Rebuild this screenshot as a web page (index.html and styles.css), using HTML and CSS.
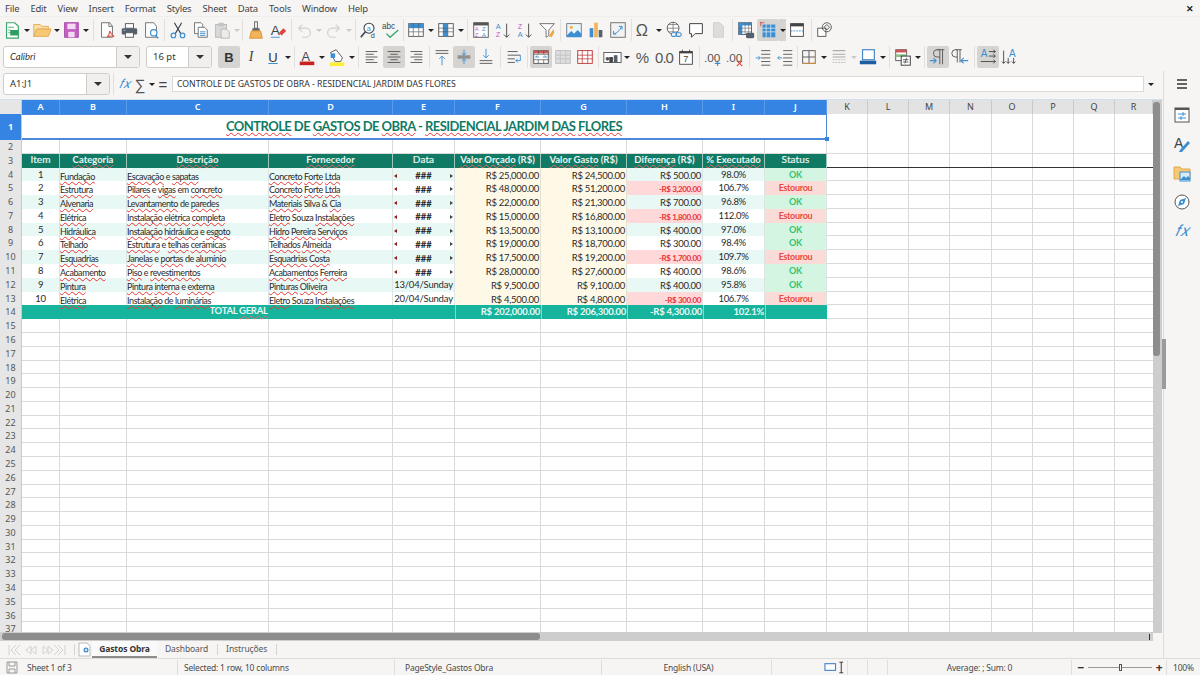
FILE: index.html
```html
<!DOCTYPE html>
<html lang="pt-BR">
<head>
<meta charset="utf-8">
<title>Controle de Gastos de Obra</title>
<link rel="stylesheet" href="styles.css">
</head>
<body>
<div class="app">
  <div class="menubar">
    <nav class="menus"><span>File</span><span>Edit</span><span>View</span><span>Insert</span><span>Format</span><span>Styles</span><span>Sheet</span><span>Data</span><span>Tools</span><span>Window</span><span>Help</span></nav>
    <span class="closex">✕</span>
  </div>

  <div class="toolbar t1">
    <span class="b"><svg class="ic" viewBox="0 0 22 22"><path d="M5 3h9l4 4v13H5z" fill="#fff" stroke="#3aa76d" stroke-width="1.3"/><rect x="9" y="11" width="9" height="6" fill="#2f9e62"/><path d="M7 8h6M7 11h2M7 14h2" stroke="#3aa76d"/></svg></span><span class="dd"></span>
    <span class="b"><svg class="ic" viewBox="0 0 22 22"><path d="M2 18V5h7l2 2h7v3H7l-3 8z" fill="#fbe0a6" stroke="#e0a84e"/><path d="M2 18l3-8h16l-3 8z" fill="#f7c873" stroke="#e0a84e"/></svg></span><span class="dd w7"></span>
    <span class="b"><svg class="ic" viewBox="0 0 22 22"><rect x="4" y="3" width="15" height="16" fill="#c65fc4" stroke="#a444a6"/><rect x="7" y="4" width="9" height="6" fill="#f3d9f2"/><rect x="8" y="13" width="7" height="6" fill="#f3d9f2"/></svg></span><span class="dd"></span>
    <span class="s s6"></span>
    <span class="b"><svg class="ic" viewBox="0 0 22 22"><path d="M5 3h9l3 4v12H5z" fill="#fff" stroke="#6b6b6b"/><path d="M13 3v4h4" fill="none" stroke="#6b6b6b"/><path d="M11 19c2-2 3-5 3-7 1 3 3 5 5 6-3-1-6 0-8 1z" fill="none" stroke="#e2574c" stroke-width="1.2"/></svg></span>
    <span class="b"><svg class="ic" viewBox="0 0 22 22"><rect x="7" y="4" width="9" height="5" fill="#fff" stroke="#555"/><rect x="3" y="9" width="17" height="7" rx="1.5" fill="#55606b"/><rect x="7" y="14" width="9" height="5" fill="#fff" stroke="#555"/><rect x="5" y="11" width="2" height="1" fill="#9ad"/></svg></span>
    <span class="b"><svg class="ic" viewBox="0 0 22 22"><path d="M5 3h9l3 4v12H5z" fill="#fff" stroke="#6b6b6b"/><circle cx="14" cy="14" r="3.5" fill="#fff" stroke="#3d8fd1" stroke-width="1.3"/><path d="M16 17l3 3" stroke="#3d8fd1" stroke-width="1.5"/></svg></span>
    <span class="s s5"></span>
    <span class="b"><svg class="ic" viewBox="0 0 22 22"><path d="M7 3l7 12M15 3L8 15" stroke="#3c4650" stroke-width="1.3"/><circle cx="6" cy="17" r="2.5" fill="none" stroke="#3d8fd1" stroke-width="1.3"/><circle cx="16" cy="17" r="2.5" fill="none" stroke="#3d8fd1" stroke-width="1.3"/></svg></span>
    <span class="b"><svg class="ic" viewBox="0 0 22 22"><path d="M5 3h7l2 2v10H5z" fill="#fff" stroke="#6b6b6b"/><path d="M9 8h7l3 3v8H9z" fill="#fff" stroke="#6b6b6b"/><path d="M11 13h6M11 15h6M11 17h6" stroke="#3d8fd1"/></svg></span>
    <span class="b"><svg class="ic" viewBox="0 0 22 22"><rect x="4" y="5" width="12" height="14" fill="#d9d9d9" stroke="#b5b5b5"/><rect x="7" y="3" width="6" height="4" fill="#c4c4c4"/><path d="M10 10h6l3 3v7h-9z" fill="#ececec" stroke="#b5b5b5"/></svg></span><span class="dd off w7"></span>
    <span class="s s5"></span>
    <span class="b"><svg class="ic" viewBox="0 0 22 22"><rect x="9.500" y="2" width="3" height="7" fill="#fff" stroke="#555"/><rect x="7" y="9" width="8" height="3" fill="#666"/><path d="M6 12h10l2 8H4z" fill="#f2b35a" stroke="#d98f2f"/></svg></span>
    <span class="b"><svg class="ic" viewBox="0 0 22 22"><text x="3" y="16" class="gl" fill="#3c4650" font-size="15">A</text><path d="M12 14l5-5 3 3-5 5z" fill="#e2453c"/><path d="M3 19h10" stroke="#3d8fd1"/></svg></span>
    <span class="s s4"></span>
    <span class="b"><svg class="ic" viewBox="0 0 22 22"><path d="M5 9h8a5 5 0 0 1 0 10H9M5 9l4-4M5 9l4 4" fill="none" stroke="#cfcfcf" stroke-width="1.3"/></svg></span><span class="dd off"></span>
    <span class="b"><svg class="ic" viewBox="0 0 22 22"><path d="M17 9H9a5 5 0 0 0 0 10h4M17 9l-4-4M17 9l-4 4" fill="none" stroke="#cfcfcf" stroke-width="1.3"/></svg></span><span class="dd off w7"></span>
    <span class="s s6"></span>
    <span class="b"><svg class="ic" viewBox="0 0 22 22"><circle cx="11" cy="9" r="5.500" fill="#fff" stroke="#3c4650" stroke-width="1.2"/><path d="M7 13l-5 6" stroke="#3c4650" stroke-width="1.8"/><text x="8.500" y="12" class="gl" font-size="8" fill="#3d8fd1">a</text><text x="13" y="20" class="gl" font-size="8" fill="#3c4650">d</text></svg></span>
    <span class="b"><svg class="ic" viewBox="0 0 22 22"><text x="1" y="10" class="gl" font-size="9" fill="#3c4650">abc</text><path d="M6 15l4 4 9-8" fill="none" stroke="#3aa76d" stroke-width="1.5"/></svg></span>
    <span class="s s3"></span>
    <span class="b"><svg class="ic" viewBox="0 0 22 22"><rect x="3" y="4" width="16" height="14" fill="#fff" stroke="#555"/><rect x="3" y="4" width="16" height="5" fill="#3d8fd1"/><path d="M3 13h16M8 4v14M14 4v14" stroke="#555" stroke-width=".7"/></svg></span><span class="dd"></span>
    <span class="b"><svg class="ic" viewBox="0 0 22 22"><rect x="3" y="4" width="16" height="14" fill="#fff" stroke="#555"/><rect x="8" y="4" width="5" height="14" fill="#3d8fd1"/><path d="M3 9h16M3 13h16M8 4v14M13 4v14" stroke="#555" stroke-width=".7"/></svg></span><span class="dd"></span>
    <span class="s s5"></span>
    <span class="b"><svg class="ic" viewBox="0 0 22 22"><rect x="3" y="3" width="16" height="16" fill="#fff" stroke="#555"/><rect x="3" y="3" width="16" height="3" fill="#555"/><text x="4" y="12" class="gl" font-size="6.500" fill="#c05fc0">A</text><text x="12" y="12" class="gl" font-size="6.500" fill="#3d8fd1">Z</text><text x="4" y="18.500" class="gl" font-size="6.500" fill="#c05fc0">Z</text><text x="12" y="18.500" class="gl" font-size="6.500" fill="#3d8fd1">A</text></svg></span>
    <span class="b"><svg class="ic" viewBox="0 0 22 22"><text x="3" y="10" class="gl" font-size="8" fill="#3d8fd1">A</text><text x="3" y="19" class="gl" font-size="8" fill="#c05fc0">Z</text><path d="M15 4v15M12 16l3 3 3-3" fill="none" stroke="#555" stroke-width="1.1"/></svg></span>
    <span class="b"><svg class="ic" viewBox="0 0 22 22"><text x="3" y="10" class="gl" font-size="8" fill="#c05fc0">Z</text><text x="3" y="19" class="gl" font-size="8" fill="#3d8fd1">A</text><path d="M15 4v15M12 16l3 3 3-3" fill="none" stroke="#555" stroke-width="1.1"/></svg></span>
    <span class="b"><svg class="ic" viewBox="0 0 22 22"><path d="M3 4h16l-6 7v6l-3 2v-8z" fill="#fff" stroke="#6b6b6b"/><path d="M13 18l5-8 1 4-3 5z" fill="#f2a63c"/></svg></span>
    <span class="s s5"></span>
    <span class="b"><svg class="ic" viewBox="0 0 22 22"><rect x="3" y="4" width="16" height="14" fill="#e9f4fc" stroke="#6b7680"/><circle cx="8" cy="8" r="1.800" fill="#f2b53c"/><path d="M3 17l5-5 3 3 4-4 4 4v4H3z" fill="#3d8fd1"/></svg></span>
    <span class="b"><svg class="ic" viewBox="0 0 22 22"><rect x="4" y="9" width="4" height="10" fill="#3d8fd1"/><rect x="9" y="3" width="4" height="16" fill="#f2b35a"/><rect x="14" y="11" width="4" height="8" fill="#55606b"/></svg></span>
    <span class="b"><svg class="ic" viewBox="0 0 22 22"><rect x="3" y="3" width="16" height="16" fill="#f2f2f2" stroke="#6b6b6b"/><path d="M6 15c3 0 7-3 9-8M12 7h3.500v3.500M6 12v3.500h3" fill="none" stroke="#3d8fd1" stroke-width="1.1"/></svg></span>
    <span class="s s4"></span>
    <span class="b"><svg class="ic" viewBox="0 0 22 22"><text x="2" y="18" class="gl" font-size="18" fill="#555">Ω</text></svg></span><span class="dd"></span>
    <span class="b"><svg class="ic" viewBox="0 0 22 22"><circle cx="10" cy="9" r="6.500" fill="#fff" stroke="#555"/><path d="M3.500 9h13M10 2.500v13M5 5h10M5 13h10" stroke="#555" stroke-width=".7"/><rect x="8" y="14" width="6" height="4" rx="2" fill="#fff" stroke="#3d8fd1" stroke-width="1.200"/><rect x="13" y="14" width="6" height="4" rx="2" fill="none" stroke="#3d8fd1" stroke-width="1.200"/></svg></span>
    <span class="b"><svg class="ic" viewBox="0 0 22 22"><path d="M4 4h14v11H10l-4 4v-4H4z" fill="#fff" stroke="#444" stroke-width="1.100"/></svg></span>
    <span class="b"><svg class="ic" viewBox="0 0 22 22"><path d="M6 3h7l4 4v12H6z" fill="#dcdcdc" stroke="#cfcfcf"/></svg></span>
    <span class="s s6"></span>
    <span class="b"><svg class="ic" viewBox="0 0 22 22"><rect x="3" y="3" width="14" height="13" fill="#fff" stroke="#555"/><rect x="3" y="3" width="14" height="3" fill="#3d8fd1"/><rect x="3" y="3" width="4" height="13" fill="#3d8fd1"/><path d="M3 9h14M3 13h14M10 3v13M14 3v13" stroke="#555" stroke-width=".6"/><rect x="11" y="14" width="9" height="6" rx="1.500" fill="#55606b"/></svg></span>
    <span class="b on"><svg class="ic" viewBox="0 0 22 22"><rect x="5" y="5" width="14" height="14" fill="#3d8fd1"/><path d="M5 9h14M5 13h14M9 5v14M14 5v14" stroke="#fff" stroke-width=".7"/><path d="M2 3h5M3 2v5" stroke="#d9534f"/></svg></span><span class="dd on w7"></span>
    <span class="b"><svg class="ic" viewBox="0 0 22 22"><rect x="4" y="4" width="14" height="14" fill="#fff" stroke="#444"/><rect x="4" y="4" width="14" height="3" fill="#444"/><path d="M4 12h14" stroke="#3d8fd1" stroke-dasharray="2 1"/></svg></span>
    <span class="s s6"></span>
    <span class="b"><svg class="ic" viewBox="0 0 22 22"><rect x="3" y="9" width="9" height="9" fill="#fff" stroke="#555"/><circle cx="13" cy="8" r="5" fill="none" stroke="#555"/><path d="M13 5l3 3-3 3-3-3z" fill="none" stroke="#555"/></svg></span>
  </div>

  <div class="toolbar t2">
    <div class="combo font"><span class="val it">Calibri</span><span class="arrow"></span></div>
    <div class="combo size"><span class="val">16 pt</span><span class="arrow"></span></div>
    <span class="b on"><b class="bold">B</b></span>
    <span class="b"><i class="ital">I</i></span>
    <span class="b"><span class="und">U</span></span><span class="dd"></span>
    <span class="s s4"></span>
    <span class="b"><svg class="ic" viewBox="0 0 22 22"><text x="5" y="15" class="gl" font-size="14" fill="#3c4650">A</text><rect x="3" y="16" width="16" height="4" fill="#c9211e"/></svg></span><span class="dd"></span>
    <span class="b"><svg class="ic" viewBox="0 0 22 22"><rect x="3" y="17" width="16" height="4" fill="#ffee33"/><path d="M4 6l6-3 7 9-2 4H9z" fill="#fff" stroke="#555"/><rect x="4" y="7" width="5" height="5" fill="#3d8fd1"/></svg></span><span class="dd w7"></span>
    <span class="s s6"></span>
    <span class="b"><svg class="ic" viewBox="0 0 22 22"><path d="M4 5h13M4 8h9M4 11h13M4 14h9M4 17h13" stroke="#555"/></svg></span>
    <span class="b on"><svg class="ic" viewBox="0 0 22 22"><path d="M4 5h14M7 8h8M4 11h14M7 14h8M4 17h14" stroke="#555"/></svg></span>
    <span class="b"><svg class="ic" viewBox="0 0 22 22"><path d="M5 5h13M9 8h9M5 11h13M9 14h9M5 17h13" stroke="#555"/></svg></span>
    <span class="s s4"></span>
    <span class="b"><svg class="ic" viewBox="0 0 22 22"><path d="M4 4h14M4 7h14" stroke="#555"/><path d="M11 20v-10M8 13l3-3 3 3" fill="none" stroke="#3d8fd1"/></svg></span>
    <span class="b on"><svg class="ic" viewBox="0 0 22 22"><path d="M4 10h14M4 12h14" stroke="#555"/><path d="M11 3v6M8.500 6.500l2.500 2.500 2.500-2.500M11 19v-6M8.500 15.500l2.500-2.500 2.500 2.500" fill="none" stroke="#3d8fd1"/></svg></span>
    <span class="b"><svg class="ic" viewBox="0 0 22 22"><path d="M11 2v10M8 9l3 3 3-3" fill="none" stroke="#3d8fd1"/><path d="M4 15h14M4 18h14" stroke="#555"/></svg></span>
    <span class="s s6"></span>
    <span class="b"><svg class="ic" viewBox="0 0 22 22"><path d="M4 5h11M4 9h14M4 13h8M4 17h8" stroke="#555"/><path d="M18 9v6h-5M15 13l-2 2 2 2" fill="none" stroke="#3d8fd1"/></svg></span>
    <span class="s s5"></span>
    <span class="b on"><svg class="ic" viewBox="0 0 22 22"><rect x="3" y="4" width="16" height="14" fill="#fff" stroke="#555"/><rect x="3" y="4" width="16" height="3" fill="#c55"/><path d="M3 8h16M3 14h16M8 4v4M14 4v4M8 14v4M14 14v4" stroke="#555" stroke-width=".8"/><path d="M5 11h4M13 11h4M5 11l2-1.500M17 11l-2-1.500" stroke="#3d8fd1"/></svg></span>
    <span class="b"><svg class="ic" viewBox="0 0 22 22"><rect x="3" y="4" width="16" height="14" fill="#dedede" stroke="#bdbdbd"/><path d="M3 9h16M3 13h16M8 4v14M14 4v14" stroke="#bdbdbd" stroke-width=".8"/></svg></span>
    <span class="b"><svg class="ic" viewBox="0 0 22 22"><rect x="3" y="4" width="16" height="14" fill="#fff" stroke="#b33"/><path d="M3 9h16M3 13h16M8 4v14M14 4v14" stroke="#b33" stroke-width=".8"/></svg></span>
    <span class="s s5"></span>
    <span class="b"><svg class="ic" viewBox="0 0 22 22"><rect x="2" y="6" width="19" height="11" fill="#fff" stroke="#555"/><rect x="8" y="11" width="4" height="6" fill="#444"/><rect x="13" y="9" width="4" height="8" fill="#55606b"/><circle cx="6" cy="13" r="2" fill="#555"/></svg></span><span class="dd w7"></span>
    <span class="s s1"></span>
    <span class="b"><span class="sym">%</span></span>
    <span class="b"><span class="sym">0.0</span></span>
    <span class="b"><svg class="ic" viewBox="0 0 22 22"><rect x="4" y="5" width="14" height="14" fill="#fff" stroke="#444"/><rect x="4" y="5" width="14" height="2" fill="#444"/><path d="M7 3v3M15 3v3" stroke="#444"/><text x="8" y="17" class="gl" font-size="10" fill="#444">7</text></svg></span>
    <span class="s s5"></span>
    <span class="b"><svg class="ic" viewBox="0 0 22 22"><text x="1" y="16" class="gl" font-size="13" fill="#555">.00</text><path d="M16 15v6M13 18h6" stroke="#3d8fd1" stroke-width="1.200"/></svg></span>
    <span class="b"><svg class="ic" viewBox="0 0 22 22"><text x="1" y="16" class="gl" font-size="13" fill="#555">.00</text><path d="M13 15l6 6M19 15l-6 6" stroke="#e2453c" stroke-width="1.200"/></svg></span>
    <span class="s s6"></span>
    <span class="b"><svg class="ic" viewBox="0 0 22 22"><path d="M9 4h10M9 8h10M9 12h10M9 16h10M9 20h10" stroke="#555"/><path d="M3 12h5M6 10l2 2-2 2" fill="none" stroke="#3d8fd1"/></svg></span>
    <span class="b"><svg class="ic" viewBox="0 0 22 22"><path d="M9 4h10M9 8h10M9 12h10M9 16h10M9 20h10" stroke="#555"/><path d="M3 12h5M5 10l-2 2 2 2" fill="none" stroke="#3d8fd1"/></svg></span>
    <span class="s s2"></span>
    <span class="b"><svg class="ic" viewBox="0 0 22 22"><path d="M4 4h14v14H4zM11 4v14M4 11h14" fill="none" stroke="#555"/><path d="M4 18h14M18 4v14" stroke="#d98f2f"/></svg></span><span class="dd"></span>
    <span class="b"><svg class="ic" viewBox="0 0 22 22"><path d="M4 4h14M4 8h14M4 11h14" stroke="#aaa" stroke-width="1.300"/><path d="M4 14h14M4 17h14" stroke="#bbb" stroke-dasharray="2 1"/></svg></span><span class="dd off w7"></span>
    <span class="b"><svg class="ic" viewBox="0 0 22 22"><rect x="5" y="3" width="13" height="11" fill="#fff" stroke="#4a87c6" stroke-width="1.300"/><rect x="2" y="15" width="18" height="4" fill="#1c5ea0"/></svg></span><span class="dd"></span>
    <span class="s s5"></span>
    <span class="b"><svg class="ic" viewBox="0 0 22 22"><rect x="3" y="3" width="12" height="12" fill="#fff" stroke="#555"/><rect x="3" y="3" width="12" height="3" fill="#c55"/><rect x="3" y="8" width="12" height="3" fill="#8bc38b"/><rect x="9" y="10" width="10" height="10" fill="#fff" stroke="#333"/><path d="M11 14h6M11 16.500h6M15 12l-2 6" stroke="#333" stroke-width=".8"/></svg></span><span class="dd"></span>
    <span class="s s5"></span>
    <span class="b on"><svg class="ic" viewBox="0 0 22 22"><path d="M13 3v16M16 3v16M10 3h8M13 3H10a4 4 0 0 0 0 8h3" fill="none" stroke="#555"/><path d="M2 15h7M6 12l3 3-3 3" fill="none" stroke="#3d8fd1" stroke-width="1.200"/></svg></span>
    <span class="b"><svg class="ic" viewBox="0 0 22 22"><path d="M8 3v14M11 3v14M6 3h7M8 3H6a4 4 0 0 0 0 8h2" fill="none" stroke="#555"/><path d="M13 15h7M15 12l-3 3 3 3" fill="none" stroke="#3d8fd1" stroke-width="1.200"/></svg></span>
    <span class="s s6"></span>
    <span class="b on"><svg class="ic" viewBox="0 0 22 22"><text x="3" y="11" class="gl" font-size="11" fill="#3d8fd1">A</text><path d="M12 5h7M17 3l2 2-2 2M12 10h7M17 8l2 2-2 2M3 16h16M17 14l2 2-2 2" fill="none" stroke="#444"/></svg></span>
    <span class="b"><svg class="ic" viewBox="0 0 22 22"><text x="10" y="11" class="gl" font-size="11" fill="#3d8fd1">A</text><path d="M4 4v14M2 16l2 2 2-2M9 12v6M7 16l2 2 2-2M15 12v6M13 16l2 2 2-2" fill="none" stroke="#444"/></svg></span>
  </div>

  <div class="toolbar t3">
    <div class="combo name"><span class="val">A1:J1</span><span class="arrow"></span></div>
    <span class="s t3s"></span>
    <span class="fx">𝑓𝑥</span>
    <span class="sum">∑</span><span class="dd sumd"></span>
    <span class="eq">=</span>
    <div class="input">CONTROLE DE GASTOS DE OBRA - RESIDENCIAL JARDIM DAS FLORES</div>
    <span class="dd inputd"></span>
  </div>

  <div class="main">
    <div class="work">
      <div class="work-top">
        <div class="sheet">
          <div class="head">
            <div class="corner"></div>
            <div class="ch sel">A</div><div class="ch sel">B</div><div class="ch sel">C</div><div class="ch sel">D</div><div class="ch sel">E</div><div class="ch sel">F</div><div class="ch sel">G</div><div class="ch sel">H</div><div class="ch sel">I</div><div class="ch sel">J</div>
            <div class="ch">K</div><div class="ch">L</div><div class="ch">M</div><div class="ch">N</div><div class="ch">O</div><div class="ch">P</div><div class="ch">Q</div><div class="ch">R</div>
          </div>
          <div class="row r1">
            <div class="rh sel">1</div>
            <div class="title"><span><u>CONTROLE</u> DE <u>GASTOS</u> DE <u>OBRA</u> - <u>RESIDENCIAL</u> <u>JARDIM</u> <u>DAS</u> <u>FLORES</u></span><i class="handle"></i></div>
          </div>
          <div class="row"><div class="rh">2</div></div>
          <div class="row r3">
            <div class="rh">3</div>
            <div class="hc big">Item</div><div class="hc"><u>Categoria</u></div><div class="hc"><u>Descrição</u></div><div class="hc"><u>Fornecedor</u></div><div class="hc big">Data</div><div class="hc"><u>Valor Orçado</u> (R$)</div><div class="hc"><u>Valor Gasto</u> (R$)</div><div class="hc"><u>Diferença</u> (R$)</div><div class="hc"><u>% Executado</u></div><div class="hc big">Status</div>
          </div>

          <div class="row z">
            <div class="rh">4</div><div class="c ctr">1</div><div class="c tx"><u>Fundação</u></div><div class="c tx"><u>Escavação</u> e <u>sapatas</u></div><div class="c tx"><u>Concreto</u> <u>Forte</u> <u>Ltda</u></div><div class="c ctr ov">###</div><div class="c nm y">R$ 25,000.00</div><div class="c nm y">R$ 24,500.00</div><div class="c nm">R$ 500.00</div><div class="c ctr">98.0%</div><div class="c st ok">OK</div>
          </div>
          <div class="row w">
            <div class="rh">5</div><div class="c ctr">2</div><div class="c tx"><u>Estrutura</u></div><div class="c tx"><u>Pilares</u> e <u>vigas</u> em <u>concreto</u></div><div class="c tx"><u>Concreto</u> <u>Forte</u> <u>Ltda</u></div><div class="c ctr ov">###</div><div class="c nm y">R$ 48,000.00</div><div class="c nm y">R$ 51,200.00</div><div class="c nm neg">-R$ 3,200.00</div><div class="c ctr">106.7%</div><div class="c st over">Estourou</div>
          </div>
          <div class="row z">
            <div class="rh">6</div><div class="c ctr">3</div><div class="c tx"><u>Alvenaria</u></div><div class="c tx"><u>Levantamento</u> de <u>paredes</u></div><div class="c tx"><u>Materiais</u> Silva &amp; <u>Cia</u></div><div class="c ctr ov">###</div><div class="c nm y">R$ 22,000.00</div><div class="c nm y">R$ 21,300.00</div><div class="c nm">R$ 700.00</div><div class="c ctr">96.8%</div><div class="c st ok">OK</div>
          </div>
          <div class="row w">
            <div class="rh">7</div><div class="c ctr">4</div><div class="c tx"><u>Elétrica</u></div><div class="c tx"><u>Instalação</u> <u>elétrica</u> <u>completa</u></div><div class="c tx"><u>Eletro</u> Souza <u>Instalações</u></div><div class="c ctr ov">###</div><div class="c nm y">R$ 15,000.00</div><div class="c nm y">R$ 16,800.00</div><div class="c nm neg">-R$ 1,800.00</div><div class="c ctr">112.0%</div><div class="c st over">Estourou</div>
          </div>
          <div class="row z">
            <div class="rh">8</div><div class="c ctr">5</div><div class="c tx"><u>Hidráulica</u></div><div class="c tx"><u>Instalação</u> <u>hidráulica</u> e <u>esgoto</u></div><div class="c tx"><u>Hidro</u> <u>Pereira</u> <u>Serviços</u></div><div class="c ctr ov">###</div><div class="c nm y">R$ 13,500.00</div><div class="c nm y">R$ 13,100.00</div><div class="c nm">R$ 400.00</div><div class="c ctr">97.0%</div><div class="c st ok">OK</div>
          </div>
          <div class="row w">
            <div class="rh">9</div><div class="c ctr">6</div><div class="c tx"><u>Telhado</u></div><div class="c tx"><u>Estrutura</u> e <u>telhas</u> <u>cerâmicas</u></div><div class="c tx"><u>Telhados</u> <u>Almeida</u></div><div class="c ctr ov">###</div><div class="c nm y">R$ 19,000.00</div><div class="c nm y">R$ 18,700.00</div><div class="c nm">R$ 300.00</div><div class="c ctr">98.4%</div><div class="c st ok">OK</div>
          </div>
          <div class="row z">
            <div class="rh">10</div><div class="c ctr">7</div><div class="c tx"><u>Esquadrias</u></div><div class="c tx"><u>Janelas</u> e <u>portas</u> de <u>alumínio</u></div><div class="c tx"><u>Esquadrias</u> <u>Costa</u></div><div class="c ctr ov">###</div><div class="c nm y">R$ 17,500.00</div><div class="c nm y">R$ 19,200.00</div><div class="c nm neg">-R$ 1,700.00</div><div class="c ctr">109.7%</div><div class="c st over">Estourou</div>
          </div>
          <div class="row w">
            <div class="rh">11</div><div class="c ctr">8</div><div class="c tx"><u>Acabamento</u></div><div class="c tx"><u>Piso</u> e <u>revestimentos</u></div><div class="c tx"><u>Acabamentos</u> <u>Ferreira</u></div><div class="c ctr ov">###</div><div class="c nm y">R$ 28,000.00</div><div class="c nm y">R$ 27,600.00</div><div class="c nm">R$ 400.00</div><div class="c ctr">98.6%</div><div class="c st ok">OK</div>
          </div>
          <div class="row z">
            <div class="rh">12</div><div class="c ctr">9</div><div class="c tx"><u>Pintura</u></div><div class="c tx"><u>Pintura</u> <u>interna</u> e <u>externa</u></div><div class="c tx"><u>Pinturas</u> <u>Oliveira</u></div><div class="c ctr date">13/04/Sunday</div><div class="c nm y">R$ 9,500.00</div><div class="c nm y">R$ 9,100.00</div><div class="c nm">R$ 400.00</div><div class="c ctr">95.8%</div><div class="c st ok">OK</div>
          </div>
          <div class="row w">
            <div class="rh">13</div><div class="c ctr">10</div><div class="c tx"><u>Elétrica</u></div><div class="c tx"><u>Instalação</u> de <u>luminárias</u></div><div class="c tx"><u>Eletro</u> Souza <u>Instalações</u></div><div class="c ctr date">20/04/Sunday</div><div class="c nm y">R$ 4,500.00</div><div class="c nm y">R$ 4,800.00</div><div class="c nm neg">-R$ 300.00</div><div class="c ctr">106.7%</div><div class="c st over">Estourou</div>
          </div>
          <div class="row total">
            <div class="rh">14</div><div class="tl"><span>TOTAL <u>GERAL</u></span></div><div class="tn">R$ 202,000.00</div><div class="tn">R$ 206,300.00</div><div class="tn">-R$ 4,300.00</div><div class="tn">102.1%</div><div class="tn"></div>
          </div>

          <div class="row"><div class="rh">15</div></div>
          <div class="row"><div class="rh">16</div></div>
          <div class="row"><div class="rh">17</div></div>
          <div class="row"><div class="rh">18</div></div>
          <div class="row"><div class="rh">19</div></div>
          <div class="row"><div class="rh">20</div></div>
          <div class="row"><div class="rh">21</div></div>
          <div class="row"><div class="rh">22</div></div>
          <div class="row"><div class="rh">23</div></div>
          <div class="row"><div class="rh">24</div></div>
          <div class="row"><div class="rh">25</div></div>
          <div class="row"><div class="rh">26</div></div>
          <div class="row"><div class="rh">27</div></div>
          <div class="row"><div class="rh">28</div></div>
          <div class="row"><div class="rh">29</div></div>
          <div class="row"><div class="rh">30</div></div>
          <div class="row"><div class="rh">31</div></div>
          <div class="row"><div class="rh">32</div></div>
          <div class="row"><div class="rh">33</div></div>
          <div class="row"><div class="rh">34</div></div>
          <div class="row"><div class="rh">35</div></div>
          <div class="row"><div class="rh">36</div></div>
          <div class="row"><div class="rh">37</div></div>
        </div>
        <div class="vscroll"><div class="vthumb"></div></div>
      </div>
      <div class="hscroll"><div class="hthumb"></div><i class="hmark"></i></div>
      <div class="tabs">
        <div class="nav"><svg class="navic" width="60" height="14" viewBox="0 0 60 14"><path d="M2 2v10M9 2L4 7l5 5M13 2L8 7l5 5M24 3l-5 4 5 4zM29 3l-5 4 5 4zM36 3l5 4-5 4zM41 3l5 4-5 4zM47 2l5 5-5 5M51 2l5 5-5 5M58 2v10" fill="none" stroke="#d2d2d2"/></svg></div>
        <span class="tsep"></span>
        <svg class="newsheet" width="14" height="15" viewBox="0 0 14 15"><path d="M1 1h8l3 3v10H1z" fill="#fff" stroke="#bbb"/><circle cx="8" cy="8" r="2.500" fill="#2e7fc9"/><path d="M8 6.500v3M6.500 8h3" stroke="#fff"/></svg>
        <div class="tab active">Gastos Obra</div>
        <div class="tab">Dashboard</div><span class="tsep"></span>
        <div class="tab">Instruções</div><span class="tsep"></span>
      </div>
    </div>
    <aside class="side">
      <svg class="sd hamb" width="14" height="12" viewBox="0 0 14 12"><path d="M2 2h10M2 6h10M2 10h10" stroke="#333" stroke-width="1.500"/></svg>
      <svg class="sd" width="18" height="18" viewBox="0 0 18 18"><rect x="2" y="2" width="14" height="14" fill="#fff" stroke="#555"/><rect x="2" y="2" width="14" height="2" fill="#555"/><path d="M5 8h8M5 12h8" stroke="#3d8fd1"/><path d="M10 6v4M8 10v4" stroke="#3d8fd1"/></svg>
      <svg class="sd" width="18" height="18" viewBox="0 0 18 18"><text x="1" y="13" class="gl" font-size="14" fill="#3c4650">A</text><path d="M7 15l8-9 2 2-8 9-3 0z" fill="#3d8fd1"/></svg>
      <svg class="sd" width="18" height="18" viewBox="0 0 18 18"><path d="M1 15V3h6l2 2h8v10z" fill="#f7c873" stroke="#e0a84e"/><rect x="7" y="8" width="10" height="9" fill="#d8ebf8" stroke="#3d8fd1"/><path d="M7 16l4-4 2 2 2-2 2 2v2z" fill="#3d8fd1"/></svg>
      <svg class="sd" width="18" height="18" viewBox="0 0 18 18"><circle cx="9" cy="9" r="7" fill="#fff" stroke="#555"/><path d="M13 5l-2 6-6 2 2-6z" fill="#3d8fd1"/><circle cx="9" cy="9" r="1" fill="#fff"/></svg>
      <span class="sfx">𝑓𝑥</span>
      <i class="grip"></i>
    </aside>
  </div>

  <div class="status">
    <div class="sc s1c"><svg width="12" height="13" viewBox="0 0 12 13"><path d="M1 1h10v11H1z" fill="none" stroke="#999"/><path d="M3 1v4h6V1M3 12V8h6v4" fill="none" stroke="#999"/></svg><span>Sheet 1 of 3</span></div>
    <div class="sc s2c">Selected: 1 row, 10 columns</div>
    <div class="sc s3c">PageStyle_Gastos Obra</div>
    <div class="sc s4c">English (USA)</div>
    <div class="sc s5c"><svg width="24" height="13" viewBox="0 0 24 13"><rect x="1" y="2.500" width="11" height="7" fill="#fff" stroke="#4a87c6" stroke-width="1.200"/><path d="M16 1h4M16 12h4M18 1v11" stroke="#333"/></svg></div>
    <div class="sc s6c"></div>
    <div class="sc s7c"></div>
    <div class="sc s8c">Average: ; Sum: 0</div>
    <div class="sc s9c"><span class="zb">−</span><span class="slider"><i></i></span><span class="zb">+</span></div>
    <div class="sc s10c">100%</div>
  </div>
</div>
</body>
</html>
```

FILE: styles.css
```css
* { box-sizing: border-box; }
html, body { margin: 0; padding: 0; }
body { width: 1200px; height: 675px; overflow: hidden; background: #f6f5f4; font-family: "Noto Sans", "Open Sans", sans-serif; color: #3d3d3d; }
.app { width: 1200px; height: 675px; display: flex; flex-direction: column; }

.menubar { height: 17px; display: flex; justify-content: space-between; align-items: center; padding: 0 6px 0 5px; border-bottom: 1px solid #efeeed; }
.menus { display: flex; gap: 11px; font-size: 9.500px; letter-spacing: -.2px; color: #444; }
.closex { font-size: 9px; color: #222; font-weight: 700; }

.toolbar { display: flex; align-items: center; flex: none; }
.t1 { height: 27px; padding: 0 0 1px 1px; }
.t2 { height: 27px; padding: 0 0 1px 3px; }
.t3 { height: 28px; padding: 0 0 2px 3px; }

.b { width: 22px; height: 22px; display: flex; align-items: center; justify-content: center; flex: none; border-radius: 2px; }
.b.on { background: #d6d4d1; }
.ic { width: 20px; height: 20px; display: block; }
.gl { font-family: "Liberation Sans", sans-serif; }
.dd { width: 8px; height: 22px; flex: none; display: flex; align-items: center; justify-content: center; }
.dd.w7 { width: 7px; }
.dd::after { content: ""; border: 3px solid transparent; border-top: 3px solid #222; border-bottom: 0; }
.dd.off::after { border-top-color: #c9c9c9; }
.dd.on { background: #d6d4d1; }
.s { height: 22px; flex: none; display: flex; justify-content: center; }
.s::after { content: ""; width: 1px; background: #e2e0dd; }
.s1 { width: 1px; } .s1::after { display: none; }
.s2 { width: 2px; } .s3 { width: 3px; } .s4 { width: 4px; } .s5 { width: 5px; } .s6 { width: 6px; }

.combo { height: 22px; display: flex; background: #fff; border: 1px solid #cfcdca; border-radius: 3px; flex: none; font-size: 9.500px; color: #333; }
.combo .val { flex: 1; padding-left: 6px; line-height: 20px; }
.combo .it { font-style: italic; font-family: "Lato", sans-serif; }
.arrow { width: 23px; background: #f0efed; border-left: 1px solid #cfcdca; display: flex; align-items: center; justify-content: center; border-radius: 0 3px 3px 0; }
.arrow::after { content: ""; border: 4px solid transparent; border-top: 4px solid #333; border-bottom: 0; }
.font { width: 137px; margin-right: 6px; }
.size { width: 66px; margin-right: 6px; }
.name { width: 107px; margin-right: 3px; }
.bold { font: 700 13px "Liberation Sans", sans-serif; color: #333; }
.ital { font: italic 14px "Liberation Serif", serif; color: #444; }
.und { font: 13px "Liberation Sans", sans-serif; color: #333; text-decoration: underline; text-decoration-color: #3d8fd1; }
.sym { font: 15px "Liberation Sans", sans-serif; color: #555; letter-spacing: -1px; }

.t3s { width: 1px; }
.fx { width: 20px; font: italic 13px "Liberation Serif", serif; color: #3d8fd1; text-align: center; }
.sum { width: 12px; font: 15px "Liberation Sans", sans-serif; color: #555; text-align: center; }
.sumd { margin: 0 0 0 2px; }
.eq { width: 14px; font: 15px "Liberation Sans", sans-serif; color: #444; text-align: center; margin-right: 2px; }
.input { width: 972px; height: 16px; background: #fff; border: 1px solid #dcdad7; padding-left: 4px; font-size: 8.700px; line-height: 14px; color: #333; flex: none; }
.inputd { margin-left: 3px; width: 8px; }

.main { flex: 1; display: flex; min-height: 0; }
.work { width: 1163px; display: flex; flex-direction: column; flex: none; border-top: 1px solid #cfe0f3; }
.work-top { height: 532px; display: flex; flex: none; }
.sheet { width: 1153px; height: 532px; overflow: hidden; background: #fff; flex: none; font-family: "Lato", sans-serif; font-size: 10px; color: #2a2a2a; }

.head { height: 13.500px; display: grid; grid-template-columns: 22px 38px 67px 142px 124px 62px 86px 86px 76px 62px 62px 41px 41px 41px 42px 41px 41px 41px 38px; }
.corner { background: #e6e6e6; border-right: 1px solid #c9c9c9; }
.ch { background: #e3e3e3; border-right: 1px solid #cacaca; font: 9px/13px "Noto Sans", sans-serif; text-align: center; color: #444; }
.ch.sel { background: #3584e4; color: #fff; font-weight: 600; border-right-color: #5b9ae8; }

.row {
  height: 13.790px;
  display: grid;
  grid-template-columns: 22px 38px 67px 142px 124px 62px 86px 86px 76px 62px 62px;
  border-bottom: 1px solid #dadada;
  background-image:
    linear-gradient(#dadada, #dadada), linear-gradient(#dadada, #dadada), linear-gradient(#dadada, #dadada), linear-gradient(#dadada, #dadada),
    linear-gradient(#dadada, #dadada), linear-gradient(#dadada, #dadada), linear-gradient(#dadada, #dadada), linear-gradient(#dadada, #dadada),
    linear-gradient(#dadada, #dadada), linear-gradient(#dadada, #dadada), linear-gradient(#dadada, #dadada), linear-gradient(#dadada, #dadada),
    linear-gradient(#dadada, #dadada), linear-gradient(#dadada, #dadada), linear-gradient(#dadada, #dadada), linear-gradient(#dadada, #dadada),
    linear-gradient(#dadada, #dadada);
  background-size: 1px 100%;
  background-repeat: no-repeat;
  background-position: 59px 0, 126px 0, 268px 0, 392px 0, 454px 0, 540px 0, 626px 0, 702px 0, 764px 0, 826px 0, 867px 0, 908px 0, 949px 0, 991px 0, 1032px 0, 1073px 0, 1114px 0;
}
.rh { background: #e6e6e6; border-right: 1px solid #c9c9c9; font: 9px/14px "Noto Sans", sans-serif; color: #555; text-align: center; }
.rh.sel { background: #3584e4; color: #fff; font-weight: 700; line-height: 25px; }

.r1 { height: 26.500px; border-bottom: 0; }
.title { grid-column: 2 / 12; position: relative; background: #fff; border-bottom: 2px solid #4a8ad8; border-right: 1px solid #4a8ad8; border-top: 1px solid #4a8ad8; text-align: center; font-size: 13px; font-weight: 700; letter-spacing: -.55px; line-height: 22px; color: #117a65; }
.handle { position: absolute; right: -3px; bottom: -3px; width: 4px; height: 4px; background: #3584e4; }

u { position: relative; text-decoration: underline wavy #e33; text-decoration-thickness: 1px; text-underline-offset: 1px; text-decoration-skip-ink: none; }

.r3 { border-bottom-color: #333; }
.hc { background: #117a65; color: #e9f5f2; border-right: 1px solid #9ac6bc; text-align: center; font-size: 9.500px; font-weight: 700; line-height: 12px; white-space: nowrap; }
.hc u { text-decoration-color: #e66; }
.hc.big { font-size: 10px; font-weight: 400; line-height: 11px; letter-spacing: .1px; -webkit-text-stroke: 0.2px #e9f5f2; }

.c { border-right: 1px solid #dde5e2; line-height: 13px; white-space: nowrap; min-width: 0; }
.z .c { background: #e8f8f5; }
.w .c { background: #fff; }
.row .c.y { background: #fef9e7; border-right-color: #e6e2d0; }
.ctr { text-align: center; font-size: 9.500px; letter-spacing: -.3px; line-height: 13px; }
.tx { padding: 1px 0 0 0; font-size: 9px; letter-spacing: -.42px; line-height: 15px; }
.nm { text-align: right; padding: 2px 1px 0 0; font-size: 9.500px; letter-spacing: -.3px; line-height: 12px; }
.row .c.neg { background: #ffd9d9; color: #e8343a; font-size: 8px; font-weight: 700; letter-spacing: -.35px; line-height: 13px; }
.row .c.st { text-align: center; font-size: 9px; letter-spacing: -.3px; font-weight: 700; line-height: 13px; }
.row .c.ok { background: #d5f5e3; color: #33c472; }
.row .c.over { background: #fadbd8; color: #e74c3c; }
.date { font-size: 9.500px; letter-spacing: -.2px; }
.ov { display: flex; justify-content: space-between; align-items: center; padding: 0 1px; line-height: 11px; font-weight: 700; letter-spacing: 0; }
.ov::before { content: ""; border: 2.500px solid transparent; border-right: 3px solid #8a1c1c; border-left: 0; }
.ov::after { content: ""; border: 2.500px solid transparent; border-left: 3px solid #444; border-right: 0; }

.total { border-bottom-color: #dadada; }
.tl { grid-column: 2 / 7; background: #16b39d; color: #e8faf6; text-align: center; font-size: 9.500px; letter-spacing: -.3px; font-weight: 700; line-height: 12px; }
.tl u { text-decoration-color: #e66; }
.tn { background: #16b39d; color: #eafaf7; border-left: 1px solid #7fd8ca; text-align: right; padding: 1px 1px 0 0; font-size: 9.500px; letter-spacing: -.25px; font-weight: 700; line-height: 12px; }

.vscroll { width: 9px; height: 533px; background: #cdcdcd; padding: 2px 2px 0 0; flex: none; }
.vthumb { height: 254px; background: #8d8d8d; border-radius: 3px; }
.hscroll { height: 9px; background: #cdcdcd; display: flex; align-items: center; padding-left: 2px; position: relative; width: 1153px; flex: none; }
.hthumb { width: 538px; height: 7px; background: #8d8d8d; border-radius: 3px; }
.hmark { position: absolute; right: 3px; top: 2px; width: 1px; height: 6px; background: #333; }

.tabs { height: 17px; display: flex; align-items: center; flex: none; font-size: 8.500px; letter-spacing: -.1px; color: #555; }
.nav { width: 74px; padding-left: 7px; display: flex; align-items: center; flex: none; }
.tsep { width: 1px; height: 11px; background: #d5d3d0; flex: none; }
.newsheet { margin: 0 0 0 3px; flex: none; }
.tab { padding: 0 9px 0 8px; height: 17px; line-height: 16px; flex: none; }
.tab.active { padding: 0; width: 65px; text-align: center; font-weight: 700; background: #fbfafa; border-bottom: 2px solid #8d8d8d; color: #333; white-space: nowrap; }

.side { width: 37px; flex: none; margin-top: -28px; position: relative; z-index: 1; background: #f6f5f4; border-left: 1px solid #dedcd9; display: flex; flex-direction: column; align-items: center; padding-top: 7px; }
.sd { flex: none; margin-bottom: 11px; }
.hamb { margin-bottom: 16px; }
.sfx { font: italic 16px "Liberation Serif", serif; color: #3d8fd1; line-height: 18px; }
.grip { position: absolute; left: -2px; top: 268px; width: 4px; height: 50px; background: #9b9b9b; }

.status { height: 17px; display: flex; flex: none; align-items: center; font-size: 8.500px; letter-spacing: -.2px; color: #4a4a4a; border-top: 1px solid #dedcd9; }
.sc { height: 15px; display: flex; align-items: center; border-right: 1px solid #e0deda; flex: none; white-space: nowrap; }
.s1c { width: 178px; padding-left: 6px; gap: 9px; }
.s2c { width: 217px; padding-left: 6px; }
.s3c { width: 207px; padding-left: 10px; }
.s4c { width: 170px; padding-left: 4px; justify-content: center; }
.s5c { width: 76px; padding-left: 52px; }
.s6c { width: 20px; }
.s7c { width: 20px; }
.s8c { width: 184px; justify-content: center; }
.s9c { width: 95px; padding-left: 5px; gap: 3px; }
.zb { font-size: 12px; font-weight: 700; color: #333; width: 8px; text-align: center; }
.slider { width: 64px; height: 1px; background: #999; display: flex; justify-content: center; align-items: center; }
.slider i { width: 3px; height: 7px; background: #f6f5f4; border: 1px solid #555; }
.s10c { border-right: 0; padding-left: 6px; }
```
